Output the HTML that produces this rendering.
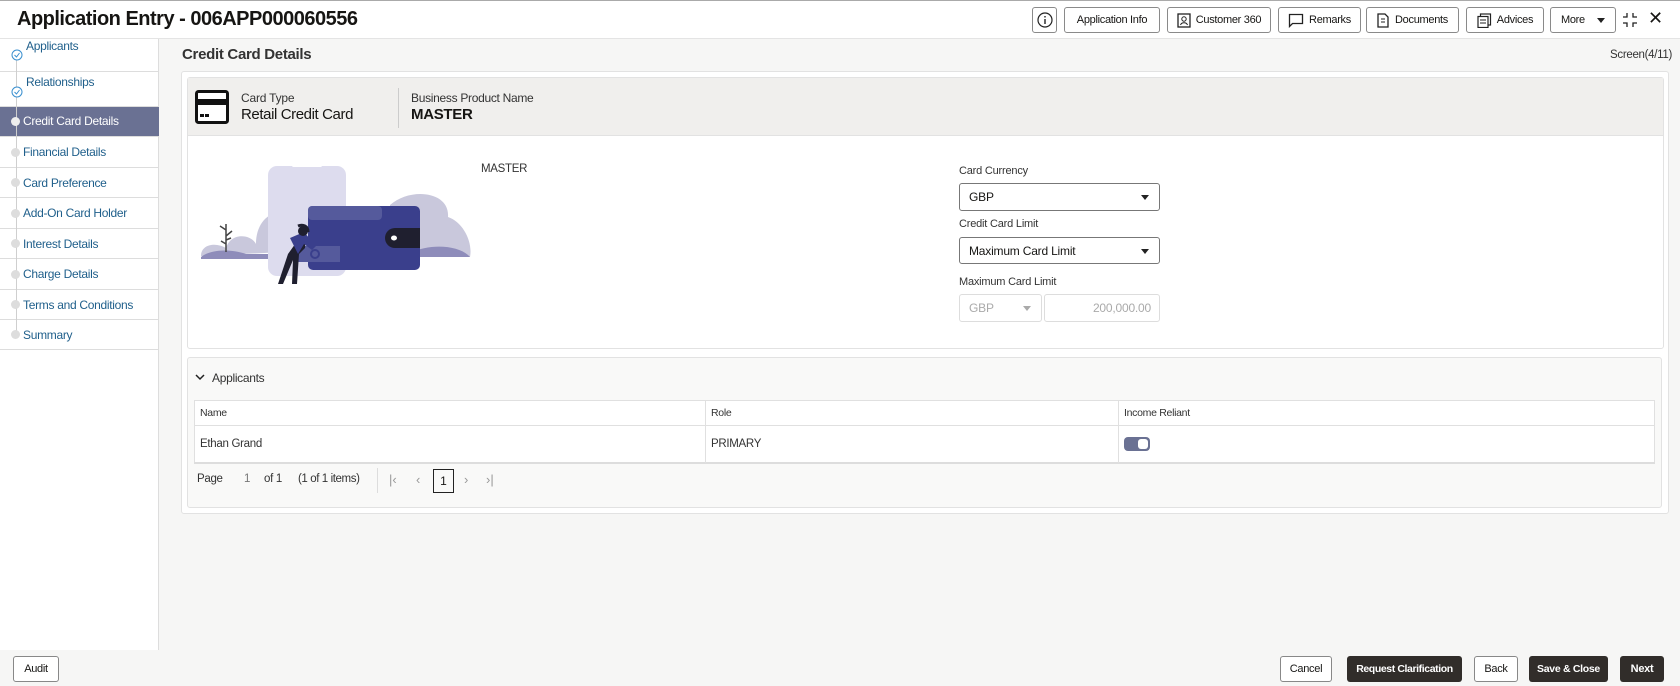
<!DOCTYPE html>
<html><head><meta charset="utf-8"><style>
*{box-sizing:border-box;margin:0;padding:0;white-space:nowrap}
body{width:1680px;height:686px;overflow:hidden;font-family:"Liberation Sans Narrow","Liberation Sans",sans-serif;color:#161513;background:#fff;position:relative;font-size:13px}
.abs{position:absolute}
.hdr{left:0;top:0;width:1680px;height:39px;background:#fff;border-top:1px solid #aaa;border-bottom:1px solid #e4e4e4}
.title{left:17px;top:8px;font-size:20px;font-weight:bold;font-family:"Liberation Sans",sans-serif;letter-spacing:-0.5px}
.hb{top:7px;height:26px;border:1px solid #8a8a8a;border-radius:3px;background:#fff;font-size:11px;letter-spacing:-0.3px;display:flex;align-items:center;justify-content:center;gap:5px}
.main{left:159px;top:39px;width:1521px;height:611px;background:#f6f6f5}
.side{left:0;top:39px;width:159px;height:311px;background:#fff;border-right:1px solid #ddd}
.si{position:absolute;left:0;width:159px;border-bottom:1px solid #ddd;color:#1f5f8b;font-size:12px;letter-spacing:-0.3px;padding-left:23px}
.dot{position:absolute;left:11px;width:9px;height:9px;border-radius:50%;background:#ddd}
.box{background:#fff;border:1px solid #e2e2e2;border-radius:3px}
.lbl{font-size:11px;color:#333;letter-spacing:-0.2px}
.sel{border:1px solid #777;border-radius:3px;background:#fff;font-size:12px;letter-spacing:-0.2px;padding-left:9px;display:flex;align-items:center}
.caret{position:absolute;right:10px;top:50%;margin-top:-2px;border-left:4px solid transparent;border-right:4px solid transparent;border-top:5px solid #222}
.fb{top:656px;height:26px;border-radius:3px;font-size:11px;letter-spacing:-0.3px;display:flex;align-items:center;justify-content:center}
.dark{background:#312d2a;color:#fff;font-weight:bold}
.light{background:#fff;border:1px solid #888}
</style></head><body>
<div class="abs main"></div>
<div class="abs hdr"></div>
<div class="abs title">Application Entry - 006APP000060556</div>
<div class="abs hb" style="left:1032px;width:25px"><svg width="16" height="16" viewBox="0 0 16 16"><circle cx="8" cy="8" r="7" fill="none" stroke="#222" stroke-width="1.2"/><path d="M8 7v5M8 4v1.5" stroke="#222" stroke-width="1.4"/></svg></div>
<div class="abs hb" style="left:1064px;width:96px">Application Info</div>
<div class="abs hb" style="left:1167px;width:104px"><svg width="14" height="15" viewBox="0 0 14 15"><rect x="1" y="1" width="12" height="13" fill="none" stroke="#222" stroke-width="1.3"/><circle cx="7" cy="6" r="2.2" fill="none" stroke="#222"/><path d="M3.5 12c1-3 6-3 7 0" fill="none" stroke="#222"/></svg>Customer 360</div>
<div class="abs hb" style="left:1278px;width:83px"><svg width="16" height="15" viewBox="0 0 16 15"><path d="M1.5 1.5h13v9h-10l-3 3z" fill="none" stroke="#222" stroke-width="1.3"/></svg>Remarks</div>
<div class="abs hb" style="left:1366px;width:93px"><svg width="13" height="15" viewBox="0 0 13 15"><path d="M1 1h7l3 3v10H1z" fill="none" stroke="#222" stroke-width="1.3"/><path d="M4 6h4M4 9h4" stroke="#222"/></svg>Documents</div>
<div class="abs hb" style="left:1466px;width:78px"><svg width="15" height="15" viewBox="0 0 15 15"><rect x="3.5" y="1" width="10" height="11" fill="none" stroke="#222" stroke-width="1.2"/><rect x="1" y="3.5" width="10" height="11" fill="#fff" stroke="#222" stroke-width="1.2"/><path d="M3 7h6M3 10h6" stroke="#222"/></svg>Advices</div>
<div class="abs hb" style="left:1550px;width:66px;justify-content:flex-start;padding-left:10px">More<span style="position:absolute;right:10px;top:10px;border-left:4px solid transparent;border-right:4px solid transparent;border-top:5px solid #222"></span></div>
<svg class="abs" style="left:1622px;top:12px" width="16" height="16" viewBox="0 0 16 16"><path d="M5 1v4H1M11 1v4h4M5 15v-4H1M11 15v-4h4" fill="none" stroke="#222" stroke-width="1.3"/></svg>
<div class="abs" style="left:1648px;top:8px;font-size:18px;font-family:'Liberation Sans',sans-serif">✕</div>

<div class="abs side">
<div class="si" style="top:0;height:33px;padding-left:26px">Applicants</div>
<div class="si" style="top:33px;height:35px;padding-top:3px;padding-left:26px">Relationships</div>
<div class="si" style="top:68px;height:30px;line-height:29px;background:#6a7193;color:#fff">Credit Card Details</div>
<div class="si" style="top:98px;height:31px;line-height:30px">Financial Details</div>
<div class="si" style="top:129px;height:30px;line-height:30px">Card Preference</div>
<div class="si" style="top:159px;height:31px;line-height:30px">Add-On Card Holder</div>
<div class="si" style="top:190px;height:30px;line-height:30px">Interest Details</div>
<div class="si" style="top:220px;height:31px;line-height:30px">Charge Details</div>
<div class="si" style="top:251px;height:30px;line-height:30px">Terms and Conditions</div>
<div class="si" style="top:281px;height:30px;line-height:30px">Summary</div>
<div class="abs" style="left:16px;top:12px;width:1px;height:285px;background:#cfcfcf"></div>
<svg class="abs" style="left:11px;top:10px" width="12" height="12"><circle cx="6" cy="6" r="5" fill="#fff" stroke="#3a8fcf"/><path d="M3.5 6l2 2 3-4" fill="none" stroke="#3a8fcf"/></svg>
<svg class="abs" style="left:11px;top:47px" width="12" height="12"><circle cx="6" cy="6" r="5" fill="#fff" stroke="#3a8fcf"/><path d="M3.5 6l2 2 3-4" fill="none" stroke="#3a8fcf"/></svg>
<div class="dot" style="top:78px;background:#eee"></div>
<div class="dot" style="top:109px"></div><div class="dot" style="top:139px"></div><div class="dot" style="top:170px"></div><div class="dot" style="top:200px"></div><div class="dot" style="top:231px"></div><div class="dot" style="top:261px"></div><div class="dot" style="top:291px"></div>
</div>

<div class="abs" style="left:182px;top:46px;font-size:15px;font-weight:bold;color:#333;letter-spacing:-0.3px">Credit Card Details</div>
<div class="abs" style="left:1610px;top:49px;font-size:11.5px;color:#333;letter-spacing:-0.3px">Screen(4/11)</div>

<div class="abs box" style="left:181px;top:71px;width:1488px;height:443px"></div>
<div class="abs box" style="left:187px;top:77px;width:1477px;height:272px"></div>
<div class="abs" style="left:188px;top:78px;width:1475px;height:58px;background:#f0efed;border-bottom:1px solid #e2e2e2"></div>
<svg class="abs" style="left:195px;top:90px" width="34" height="34" viewBox="0 0 34 34"><rect x="1.5" y="1.5" width="31" height="31" rx="2" fill="#fff" stroke="#111" stroke-width="3"/><rect x="2" y="9" width="30" height="6" fill="#111"/><rect x="5" y="24" width="4" height="3" fill="#111"/><rect x="10" y="24" width="4" height="3" fill="#111"/></svg>
<div class="abs" style="left:241px;top:91px;font-size:12px;color:#333;letter-spacing:-0.2px">Card Type</div>
<div class="abs" style="left:241px;top:106px;font-size:15px;letter-spacing:-0.4px">Retail Credit Card</div>
<div class="abs" style="left:398px;top:88px;width:1px;height:40px;background:#ccc"></div>
<div class="abs" style="left:411px;top:91px;font-size:12px;color:#333;letter-spacing:-0.3px">Business Product Name</div>
<div class="abs" style="left:411px;top:106px;font-size:15px;font-weight:bold;letter-spacing:-0.3px">MASTER</div>

<svg class="abs" style="left:200px;top:160px" width="280" height="130" viewBox="0 0 280 130">
<path d="M1 96c0-12 15-14 25-8c5-16 25-14 30-4c0-20 12-34 28-30v38z" fill="#c9c8dc"/>
<path d="M190 45c20-18 60-14 58 12c15 5 25 25 22 40h-80z" fill="#c9c8dc"/>
<path d="M1 97c10-8 30-8 45-3h30v5h-75z" fill="#8e8cba"/>
<path d="M145 97c20-14 50-12 65-4c20-10 50-8 60 4z" fill="#8e8cba"/>
<rect x="68" y="6" width="78" height="110" rx="9" fill="#dddcee"/>
<rect x="92" y="4" width="30" height="3" rx="1.5" fill="#fff"/>
<rect x="108" y="46" width="112" height="64" rx="5" fill="#3a3f8c"/>
<rect x="108" y="46" width="74" height="14" rx="4" fill="#555a9c"/>
<path d="M195 68h25v20h-25a10 10 0 0 1 0-20z" fill="#1f1f2f"/><ellipse cx="194" cy="78" rx="3" ry="2.5" fill="#fff"/>
<rect x="95" y="86" width="45" height="16" fill="#555a9c"/>
<circle cx="115" cy="94" r="4" fill="none" stroke="#3a3f8c" stroke-width="2"/>
<path d="M98 80c4-2 8 0 7 8l-6 6l-2 30h-5l1-24l-10 24h-5l10-30z" fill="#1f1f2f"/>
<path d="M90 78l14-6l12 14l-4 4l-8-6l-6 10z" fill="#3a3f8c"/>
<circle cx="103" cy="71" r="5" fill="#1f1f2f"/>
<path d="M98 66c5-2 10 0 10 6" stroke="#1f1f2f" stroke-width="3" fill="none"/>
<path d="M26 92l0-28M26 70l-6-4M26 76l6-5M26 84l-5-3M26 80l5-2" stroke="#444" stroke-width="1.5"/>
</svg>
<div class="abs" style="left:481px;top:163px;font-size:11.5px;color:#333;letter-spacing:-0.3px">MASTER</div>

<div class="abs lbl" style="left:959px;top:165px">Card Currency</div>
<div class="abs sel" style="left:959px;top:183px;width:201px;height:28px">GBP<span class="caret"></span></div>
<div class="abs lbl" style="left:959px;top:218px">Credit Card Limit</div>
<div class="abs sel" style="left:959px;top:237px;width:201px;height:27px">Maximum Card Limit<span class="caret"></span></div>
<div class="abs lbl" style="left:959px;top:276px">Maximum Card Limit</div>
<div class="abs sel" style="left:959px;top:294px;width:83px;height:28px;border-color:#ddd;color:#aaa">GBP<span class="caret" style="border-top-color:#aaa"></span></div>
<div class="abs sel" style="left:1044px;top:294px;width:116px;height:28px;border-color:#ddd;color:#aaa;justify-content:flex-end;padding-right:8px">200,000.00</div>

<div class="abs box" style="left:187px;top:357px;width:1475px;height:151px;background:#f9f9f8"></div>
<svg class="abs" style="left:195px;top:373px" width="10" height="8"><path d="M1 2l4 4 4-4" fill="none" stroke="#222" stroke-width="1.5"/></svg>
<div class="abs" style="left:212px;top:371px;font-size:12px;color:#333;letter-spacing:-0.3px">Applicants</div>
<div class="abs" style="left:194px;top:400px;width:1461px;height:63px;background:#fff;border:1px solid #e0e0e0"></div>
<div class="abs" style="left:194px;top:425px;width:1461px;height:1px;background:#e0e0e0"></div>
<div class="abs" style="left:194px;top:462px;width:1461px;height:2px;background:#ddd"></div>
<div class="abs" style="left:705px;top:400px;width:1px;height:63px;background:#e0e0e0"></div>
<div class="abs" style="left:1118px;top:400px;width:1px;height:63px;background:#e0e0e0"></div>
<div class="abs" style="left:200px;top:407px;font-size:10.5px;color:#333;letter-spacing:-0.3px">Name</div>
<div class="abs" style="left:711px;top:407px;font-size:10.5px;color:#333;letter-spacing:-0.3px">Role</div>
<div class="abs" style="left:1124px;top:407px;font-size:10.5px;color:#333;letter-spacing:-0.3px">Income Reliant</div>
<div class="abs" style="left:200px;top:438px;font-size:11.5px;color:#333;letter-spacing:-0.3px">Ethan Grand</div>
<div class="abs" style="left:711px;top:438px;font-size:11.5px;color:#333;letter-spacing:-0.3px">PRIMARY</div>
<div class="abs" style="left:1124px;top:437px;width:26px;height:14px;border-radius:4px;background:#6a7193"><div style="position:absolute;right:2px;top:2px;width:10px;height:10px;border-radius:3px;background:#fff"></div></div>
<div class="abs" style="left:197px;top:473px;font-size:11.5px;color:#333;letter-spacing:-0.3px">Page</div>
<div class="abs" style="left:244px;top:473px;font-size:11.5px;color:#777">1</div>
<div class="abs" style="left:264px;top:473px;font-size:11.5px;color:#333;letter-spacing:-0.3px">of 1</div>
<div class="abs" style="left:298px;top:473px;font-size:11.5px;color:#333;letter-spacing:-0.4px">(1 of 1 items)</div>
<div class="abs" style="left:377px;top:468px;width:1px;height:25px;background:#ddd"></div>
<div class="abs" style="left:389px;top:472px;font-size:13px;color:#999">|‹</div>
<div class="abs" style="left:416px;top:472px;font-size:13px;color:#999">‹</div>
<div class="abs" style="left:433px;top:469px;width:21px;height:24px;border:1px solid #222;font-size:12px;text-align:center;line-height:22px">1</div>
<div class="abs" style="left:464px;top:472px;font-size:13px;color:#999">›</div>
<div class="abs" style="left:486px;top:472px;font-size:13px;color:#999">›|</div>

<div class="abs" style="left:0;top:350px;width:159px;height:300px;background:#fff;border-right:1px solid #ddd"></div>
<div class="abs" style="left:0;top:650px;width:1680px;height:36px;background:#f6f6f5"></div>
<div class="abs fb light" style="left:13px;width:46px">Audit</div>
<div class="abs fb light" style="left:1280px;width:52px">Cancel</div>
<div class="abs fb dark" style="left:1347px;width:115px;font-size:10.5px;letter-spacing:-0.4px">Request Clarification</div>
<div class="abs fb light" style="left:1474px;width:44px">Back</div>
<div class="abs fb dark" style="left:1529px;width:79px;font-size:10.5px">Save &amp; Close</div>
<div class="abs fb dark" style="left:1620px;width:44px">Next</div>
</body></html>
